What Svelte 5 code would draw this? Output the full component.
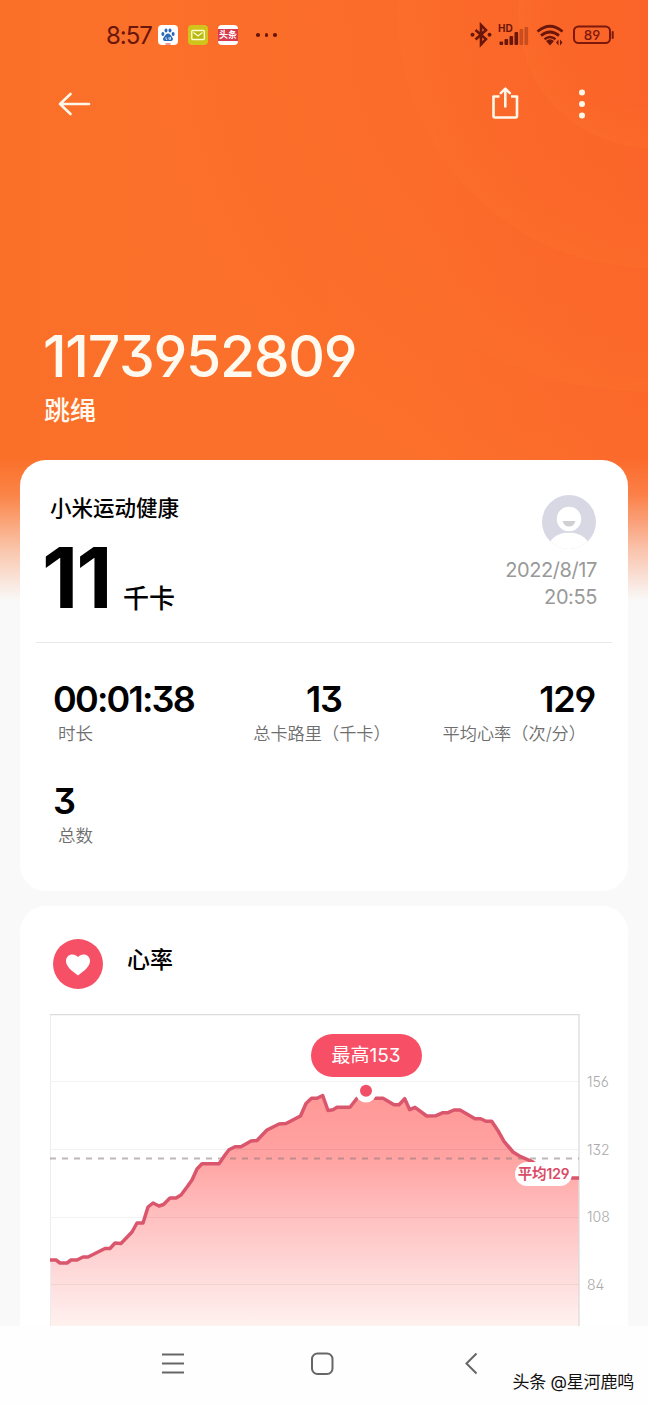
<script lang="ts">
  const stats = [
    { value: '00:01:38', label: '时长', align: 'start' },
    { value: '13', label: '总卡路里（千卡）', align: 'center' },
    { value: '129', label: '平均心率（次/分）', align: 'end' },
    { value: '3', label: '总数', align: 'start' }
  ];

  const ticks = [156, 132, 108, 84];
  const gridY = [67.5, 135.5, 203.5, 270.5];
  const rings = [134, 254, 378, 500];

  // heart rate curve, in chart units
  const points = [
    [0, 246], [6, 246], [10, 249], [17, 249], [21, 246], [27, 246], [33, 243], [38, 243],
    [55, 234.5], [60, 234.5], [65, 229], [71, 229.5], [82, 218], [87, 209], [93, 209],
    [98, 193], [103, 189], [109, 192], [113.5, 190.5], [120, 184], [126, 184], [131, 181],
    [137, 173], [142, 166], [147, 155], [152, 149.7], [169, 149.7], [175, 141], [179, 135.7],
    [185, 132.7], [191, 132.7], [201, 127], [207, 126.5], [217, 116], [229, 110], [236, 109.5],
    [250.5, 102], [256, 89.5], [261.5, 84.3], [267, 84.3], [272.7, 81.5], [278, 96.5],
    [283, 95.7], [287, 93.3], [300, 93.3], [307, 84.3], [316, 77], [325, 84.3], [333, 84.3],
    [344, 90.7], [349, 90.7], [354.7, 84.7], [359.7, 95.7], [365, 93.3], [376.7, 102],
    [386, 101.7], [393, 98.7], [398, 98.7], [404, 96], [410, 96], [425, 104.7], [430.7, 104.7],
    [436, 107.3], [441.7, 107.3], [448, 116.7], [454, 127.3], [463, 138], [470.7, 142.7],
    [482, 147.5], [500, 160], [521.7, 164], [529, 164]
  ];

  const line = points.map((p) => p.join(',')).join(' ');
  const area = `0,312 ${line} 529,312`;
</script>

<div class="screen">
  <div class="content">
    <svg class="backdrop" width="648" height="610" viewBox="0 0 648 610">
      <defs>
        <linearGradient id="orange" x1="0" y1="0" x2="1" y2="0">
          <stop offset="0" stop-color="#fb7029" />
          <stop offset="0.65" stop-color="#fb702b" />
          <stop offset="1" stop-color="#fb692b" />
        </linearGradient>
        <linearGradient id="fade" x1="0" y1="0" x2="0" y2="1">
          <stop offset="0.75" stop-color="#f9f9f9" stop-opacity="0" />
          <stop offset="0.81" stop-color="#f9f9f9" stop-opacity="0.14" />
          <stop offset="0.9" stop-color="#f9f9f9" stop-opacity="0.62" />
          <stop offset="0.985" stop-color="#f9f9f9" />
        </linearGradient>
        <radialGradient id="ring">
          <stop offset="0.6" stop-color="#fc622c" stop-opacity="0.1" />
          <stop offset="1" stop-color="#fc722c" stop-opacity="0.4" />
        </radialGradient>
      </defs>
      <rect width="648" height="610" fill="url(#orange)" />
      {#each [...rings].reverse() as r}
        <circle cx="652" cy="14" {r} fill="#fb5a2e" fill-opacity="0.03" />
        <circle cx="652" cy="14" {r} fill="url(#ring)" />
      {/each}
      <rect width="648" height="610" fill="url(#fade)" />
    </svg>

    <div class="status">
      <span class="clock">8:57</span>
      <svg class="app" width="20" height="20" viewBox="0 0 20 20">
        <rect width="20" height="20" rx="4" fill="#fff" />
        <g fill="#2b68b8">
          <ellipse cx="4.9" cy="9" rx="1.5" ry="2" />
          <ellipse cx="8" cy="5.4" rx="1.5" ry="2" />
          <ellipse cx="12" cy="5.4" rx="1.5" ry="2" />
          <ellipse cx="15.1" cy="9" rx="1.5" ry="2" />
          <path d="M10 8.6c2 0 2.7 2.1 4 3.3 1.7 1.6.8 4.1-1.3 4.1H7.3c-2.1 0-3-2.5-1.3-4.1C7.3 10.7 8 8.6 10 8.6z" />
        </g>
        <path d="M8 12.3v2h1.2M11 12v2.3h1.5V12" fill="none" stroke="#fff" stroke-width="0.8" />
        <path d="M7.5 19h5" stroke="#d33" />
      </svg>
      <svg class="app" width="20" height="20" viewBox="0 0 20 20">
        <rect width="20" height="20" rx="4" fill="#d0c41c" />
        <rect x="3.8" y="5.5" width="12.5" height="9" rx="1" fill="#b5b910" stroke="#fffbd0" stroke-width="1.4" />
        <path d="M5.5 7.5l4.5 3.5 4.5-3.5" fill="none" stroke="#fffbd0" stroke-width="1.3" />
      </svg>
      <span class="app news">头条</span>
      <span class="dots"><i></i><i></i><i></i></span>

      <svg class="signals" width="146" height="26" viewBox="0 0 146 26">
        <path d="M5.5 8l10.500 9-5 5.500V3l5 5.200-10.500 9.300" fill="none" stroke="#6b160b" stroke-width="2.6" />
        <g fill="#6b160b">
          <circle cx="2.5" cy="12.7" r="2" />
          <circle cx="19.5" cy="12.7" r="2" />
          <text x="28" y="10.2" class="hd">HD</text>
          <rect x="29.5" y="19.5" width="3.6" height="3.5" rx="1" />
          <rect x="34.5" y="17" width="3.6" height="6" rx="1" />
          <rect x="39.5" y="14" width="3.6" height="9" rx="1" />
          <rect x="44.5" y="10" width="3.6" height="13" rx="1" />
          <g fill-opacity="0.35">
            <rect x="49.5" y="7" width="3.6" height="16" rx="1" />
            <rect x="54.5" y="5" width="3.6" height="18" rx="1" />
          </g>
          <path d="M76 19q4-3.5 8 0L80 23.5z" />
          <path d="M86 20.5l2.5-3v6zM92.5 20.5L90 17.5v6z" />
        </g>
        <g fill="none" stroke="#6b160b" stroke-width="2.8">
          <path d="M67.5 9.5q12.500-10.500 25 0" />
          <path d="M71 13.7q9-7.5 18 0" />
          <path d="M74.5 17.2q5.500-4.500 11 0" stroke-width="2.4" />
        </g>
        <rect x="104" y="4.5" width="36" height="16.5" rx="4.5" fill="none" stroke="#7d180c" stroke-width="2" />
        <path d="M142.7 10v6" stroke="#7d180c" stroke-width="2" stroke-linecap="round" />
        <text x="122" y="17.5" text-anchor="middle" class="battery">89</text>
      </svg>
    </div>

    <div class="toolbar">
      <svg width="34" height="28" viewBox="0 0 34 28">
        <path d="M13.5 4L3 14l10.500 10M3 14h29" fill="none" stroke="#fff8ea" stroke-width="2.6" stroke-linecap="round" stroke-linejoin="round" />
      </svg>
      <svg class="share" width="30" height="34" viewBox="0 0 30 34">
        <path d="M9.5 10.5H3.500v19.500q0 1.500 1.500 1.500h20.500q1.500 0 1.500-1.500V10.500h-6" fill="none" stroke="#fff8ea" stroke-width="2.6" stroke-linejoin="round" />
        <path d="M15.3 20.5V5M10.8 7.2l4.500-4.500 4.500 4.500" fill="none" stroke="#fff8ea" stroke-width="2.6" stroke-linecap="round" stroke-linejoin="round" />
      </svg>
      <svg width="8" height="32" viewBox="0 0 8 32">
        <g fill="#fff8ea">
          <circle cx="4" cy="4.5" r="3" />
          <circle cx="4" cy="16" r="3" />
          <circle cx="4" cy="27.5" r="3" />
        </g>
      </svg>
    </div>

    <div class="title">
      <h1>1173952809</h1>
      <p>跳绳</p>
    </div>

    <section class="card summary">
      <header>
        <div class="total">
          <h2>小米运动健康</h2>
          <p><strong>11</strong><span>千卡</span></p>
        </div>
        <div class="meta">
          <svg width="54" height="54" viewBox="0 0 54 54">
            <clipPath id="face"><circle cx="27" cy="27" r="27" /></clipPath>
            <g clip-path="url(#face)">
              <rect width="54" height="54" fill="#d8d8e4" />
              <ellipse cx="27" cy="54" rx="21" ry="16.5" fill="#fff" />
              <circle cx="27" cy="24" r="13" fill="#fff" stroke="#d8d8e4" stroke-width="1.5" />
            </g>
            <path d="M20.5 26h13q-1.500 5.500-6.500 5.500t-6.500-5.500z" fill="#d0d0d4" />
          </svg>
          <span>2022/8/17</span>
          <span>20:55</span>
        </div>
      </header>
      <div class="stats">
        {#each stats as stat}
          <div class="stat {stat.align}">
            <b>{stat.value}</b>
            <span>{stat.label}</span>
          </div>
        {/each}
      </div>
    </section>

    <section class="card heart">
      <header>
        <svg width="50" height="50" viewBox="0 0 50 50">
          <circle cx="25" cy="25" r="25" fill="#f55066" />
          <path d="M25 36.500C19 32 13 27.500 13 22c0-4 3-6.500 6.300-6.500 2.400 0 4.400 1.200 5.700 2.500 1.300-1.300 3.300-2.500 5.700-2.500 3.300 0 6.300 2.500 6.300 6.500 0 5.500-6 10-12 14.500z" fill="#fff" />
        </svg>
        <h3>心率</h3>
      </header>
      <div class="chart">
        <div class="plot">
          <svg width="530" height="312" viewBox="0 0 530 312">
            <defs>
              <linearGradient id="fill" gradientUnits="userSpaceOnUse" x1="0" y1="80" x2="0" y2="312">
                <stop offset="0" stop-color="#ff9896" />
                <stop offset="0.27" stop-color="#ffa3a2" />
                <stop offset="0.55" stop-color="#ffc2c2" />
                <stop offset="0.85" stop-color="#fee2e1" />
                <stop offset="1" stop-color="#fff1ef" />
              </linearGradient>
            </defs>
            <polygon points={area} fill="url(#fill)" />
            {#each gridY as y}
              <path d="M0 {y}h529" stroke="#000" stroke-opacity="0.05" />
            {/each}
            <path d="M0.5 312V0.5" fill="none" stroke="#ececec" />
            <path d="M0 0.5H529V312" fill="none" stroke="#dcdcdc" stroke-width="1.3" />
            <path d="M0 144.5h529" stroke="#8a7a7c" stroke-opacity="0.55" stroke-width="1.8" stroke-dasharray="6 6" />
            <polyline points={line} fill="none" stroke="#da566d" stroke-width="3.5" stroke-linejoin="round" />
            <circle cx="316" cy="78" r="10.5" fill="#fff" />
            <circle cx="316" cy="76.8" r="6" fill="#ef5068" />
          </svg>
          <span class="max">最高153</span>
          <span class="avg">平均129</span>
        </div>
        <div class="ticks">
          {#each ticks as tick}
            <span>{tick}</span>
          {/each}
        </div>
      </div>
    </section>
  </div>

  <nav>
    <svg width="24" height="24" viewBox="0 0 24 24">
      <path d="M1 2.5h22M1 11.5h22M1 20.5h22" stroke="#666" stroke-width="2" />
    </svg>
    <svg width="24" height="24" viewBox="0 0 24 24">
      <rect x="2" y="1.5" width="20.5" height="20.5" rx="5.5" fill="none" stroke="#666" stroke-width="2" />
    </svg>
    <svg width="24" height="24" viewBox="0 0 24 24">
      <path d="M17.5 1.5L7.500 11.5l10 10" fill="none" stroke="#666" stroke-width="2" />
    </svg>
  </nav>
  <span class="credit">头条 @星河鹿鸣</span>
</div>

<style>
  .screen {
    position: relative;
    width: 648px;
    height: 1404px;
    display: flex;
    flex-direction: column;
    overflow: hidden;
    background: #f9f9f9;
    color: #000;
    font-family: Inter, 'Noto Sans CJK SC', sans-serif;
    /* straight-tailed 9 and flat-topped 3 */
    font-feature-settings: 'ss01', 'cv09';
    font-kerning: none;
  }

  h1, h2, h3, p {
    margin: 0;
    font-weight: 500;
  }

  svg {
    display: block;
    flex: none;
  }

  .content {
    position: relative;
    height: 1326px;
    overflow: hidden;
  }

  .backdrop {
    position: absolute;
    top: 0;
    left: 0;
  }

  .content > :not(.backdrop) {
    position: relative;
  }

  .status {
    display: flex;
    align-items: center;
    height: 70px;
    padding: 0 32px 0 106px;
  }

  .clock {
    width: 52px;
    color: #6b160b;
    font-size: 24px;
    letter-spacing: -1px;
  }

  .app {
    margin-right: 10px;
  }

  .news {
    width: 20px;
    box-sizing: border-box;
    border: solid #fff;
    border-width: 4px 0;
    border-radius: 4px;
    background: #d83a4e;
    color: #fff;
    font-size: 9px;
    font-weight: 700;
    line-height: 12px;
    text-align: center;
  }

  .dots {
    display: flex;
    gap: 5px;
    margin-left: 8px;
  }

  .dots i {
    width: 3.5px;
    height: 3.5px;
    border-radius: 50%;
    background: #6b160b;
  }

  .signals {
    margin-left: auto;
  }

  .hd {
    font-size: 10px;
    font-weight: 700;
  }

  .battery {
    fill: #7d180c;
    font-size: 13.5px;
    font-weight: 500;
  }

  .toolbar {
    display: flex;
    align-items: center;
    height: 68px;
    padding: 0 62px 0 57px;
  }

  .share {
    margin: -3px 58.5px 0 auto;
  }

  .title {
    height: 322px;
    box-sizing: border-box;
    padding: 186px 43px 0;
    color: #fffaf0;
  }

  h1 {
    font-size: 57px;
    line-height: 66px;
    letter-spacing: -1.3px;
  }

  .title p {
    padding: 3px 1px;
    font-size: 26px;
    line-height: 36px;
  }

  .card {
    margin: 0 20px;
    border-radius: 26px;
    background: #fff;
  }

  .summary {
    height: 431px;
    box-sizing: border-box;
    padding: 0 16px;
  }

  .summary header {
    display: flex;
    justify-content: space-between;
    height: 182px;
    padding: 0 15px 0 6px;
    border-bottom: 1.5px solid #e8e8e8;
  }

  .total h2 {
    padding: 34px 0 0 8px;
    font-size: 21.5px;
    line-height: 28px;
  }

  .total p {
    display: flex;
    align-items: baseline;
    margin-top: 8px;
  }

  .total strong {
    width: 68px;
    font-size: 84px;
    font-weight: 700;
    line-height: 96px;
    letter-spacing: -2px;
  }

  .total span {
    margin-left: 13px;
    font-size: 26px;
  }

  .meta {
    display: flex;
    flex-direction: column;
    align-items: flex-end;
    padding-top: 35px;
    color: #999;
    font-size: 20px;
    line-height: 27px;
    letter-spacing: -0.4px;
  }

  .meta svg {
    margin: 0 1px 8px 0;
  }

  .stats {
    display: grid;
    grid-template-columns: 1fr 1fr 1fr;
    grid-auto-rows: 102px;
    padding: 34px 17px 0;
  }

  .stat {
    display: flex;
    flex-direction: column;
    white-space: nowrap;
  }

  .stat.center {
    align-items: center;
  }

  .stat.end {
    align-items: flex-end;
  }

  .stat b {
    font-size: 36px;
    font-weight: 600;
    line-height: 44px;
    letter-spacing: -1.8px;
  }

  .stat.center b,
  .stat.end b {
    letter-spacing: -1.2px;
  }

  .stat span {
    padding: 0 7px 0 5px;
    color: #6e6e6e;
    font-size: 17.5px;
    line-height: 26px;
    font-weight: 350;
  }

  .stat.center span,
  .stat.end span {
    padding-right: 9px;
    font-size: 17.2px;
  }

  .heart {
    height: 500px;
    margin-top: 15px;
  }

  .heart header {
    display: flex;
    gap: 24px;
    height: 75px;
    padding: 33px 33px 0;
  }

  .heart h3 {
    font-size: 23px;
    line-height: 42px;
  }

  .chart {
    display: flex;
    padding-left: 30px;
  }

  .plot {
    position: relative;
  }

  .max,
  .avg {
    position: absolute;
    text-align: center;
    white-space: nowrap;
  }

  .max {
    left: 260.5px;
    top: 20px;
    width: 111px;
    border-radius: 22px;
    background: #f75066;
    color: #fff;
    font-size: 19px;
    line-height: 43px;
  }

  .avg {
    left: 465px;
    top: 148px;
    width: 57px;
    border-radius: 12px;
    background: #fff;
    color: #d94c67;
    font-size: 14.5px;
    font-weight: 600;
    line-height: 24px;
    letter-spacing: -0.3px;
  }

  .ticks {
    display: flex;
    flex-direction: column;
    padding: 34px 0 0 7px;
    color: #aaa;
    font-size: 14px;
    font-weight: 300;
    line-height: 67.7px;
  }

  nav {
    flex: 1;
    display: flex;
    justify-content: center;
    gap: 125px;
    padding: 26px 5px 0 0;
    background: #fefefe;
  }

  .credit {
    position: absolute;
    right: 14px;
    bottom: 8px;
    color: #111;
    font-size: 17px;
    line-height: 28px;
    letter-spacing: -0.2px;
    text-shadow: 0 0 2px #fff;
    white-space: nowrap;
  }
</style>
